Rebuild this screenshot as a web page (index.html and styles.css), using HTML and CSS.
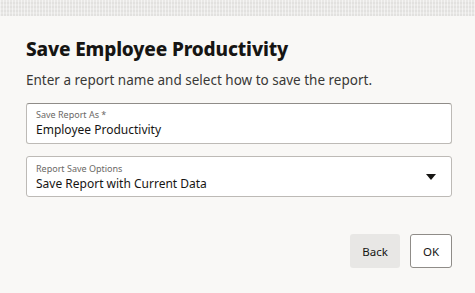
FILE: index.html
```html
<!DOCTYPE html>
<html lang="en">
<head>
    <meta charset="UTF-8">
    <meta name="viewport" content="width=device-width, initial-scale=1.0">
    <title>Save Employee Productivity</title>
    <link rel="stylesheet" href="styles.css">
</head>
<body>
    <div class="backdrop"></div>
    <div class="dialog">
        <h1 class="title">Save Employee Productivity</h1>
        <p class="intro">Enter a report name and select how to save the report.</p>

        <div class="field field-text">
            <label class="field-label" for="reportName">Save Report As *</label>
            <input type="text" id="reportName" class="field-value" value="Employee Productivity">
        </div>

        <div class="field field-select">
            <div class="field-body">
                <span class="field-label">Report Save Options</span>
                <span class="field-value">Save Report with Current Data</span>
            </div>
            <svg class="caret" width="10" height="6" viewBox="0 0 10 6">
                <path d="M0 0 H10 L5 6 Z" fill="#161513"/>
            </svg>
        </div>

        <div class="actions">
            <button class="btn btn-back">Back</button>
            <button class="btn btn-ok">OK</button>
        </div>
    </div>
</body>
</html>
```

FILE: styles.css
```css
body {
    margin: 0;
    background-color: #f9f8f6;
    font-family: "Noto Sans", "Open Sans", sans-serif;
    color: #161513;
}

.backdrop {
    height: 16px;
    background-color: #e9e8e6;
    background-image:
        repeating-linear-gradient(90deg, rgba(255, 255, 255, 0.5) 0 1px, transparent 1px 3px),
        repeating-linear-gradient(0deg, rgba(0, 0, 0, 0.03) 0 2px, transparent 2px 4px);
}

.dialog {
    padding: 0 23px 0 26px;
}

.title {
    margin: 21px 0 0;
    font-size: 19px;
    font-weight: 800;
    line-height: 24px;
    letter-spacing: -0.15px;
}

.intro {
    margin: 9px 0 0;
    font-size: 13.5px;
    line-height: 20px;
    color: #3a3836;
}

.field {
    box-sizing: border-box;
    height: 41px;
    background-color: #fff;
    border: 1px solid #bdbab6;
    border-radius: 3px;
    padding: 5px 9px 0;
}

.field-text {
    margin-top: 13px;
    border-top-color: #8f8c88;
}

.field-select {
    margin-top: 12px;
    display: flex;
    align-items: center;
    padding-top: 0;
    padding-right: 15px;
}

.field-body {
    flex: 1;
    padding-top: 1px;
}

.field-label {
    display: block;
    font-size: 9px;
    line-height: 12px;
    color: #6b6966;
}

.field-value {
    display: block;
    width: 100%;
    padding: 0;
    margin: 0;
    border: none;
    outline: none;
    background: transparent;
    font-family: inherit;
    font-size: 12px;
    line-height: 17px;
    color: #161513;
}

.caret {
    display: block;
    margin-top: 1px;
}

.actions {
    display: flex;
    justify-content: flex-end;
    gap: 10px;
    margin-top: 37px;
}

.btn {
    box-sizing: border-box;
    height: 34px;
    padding: 0 8px;
    font-family: inherit;
    font-size: 11.5px;
    color: #161513;
    border-radius: 3px;
    cursor: pointer;
}

.btn-back {
    width: 50px;
    background-color: #e8e7e5;
    border: none;
}

.btn-ok {
    width: 42px;
    background-color: #fff;
    border: 1px solid #8f8c88;
}
```
